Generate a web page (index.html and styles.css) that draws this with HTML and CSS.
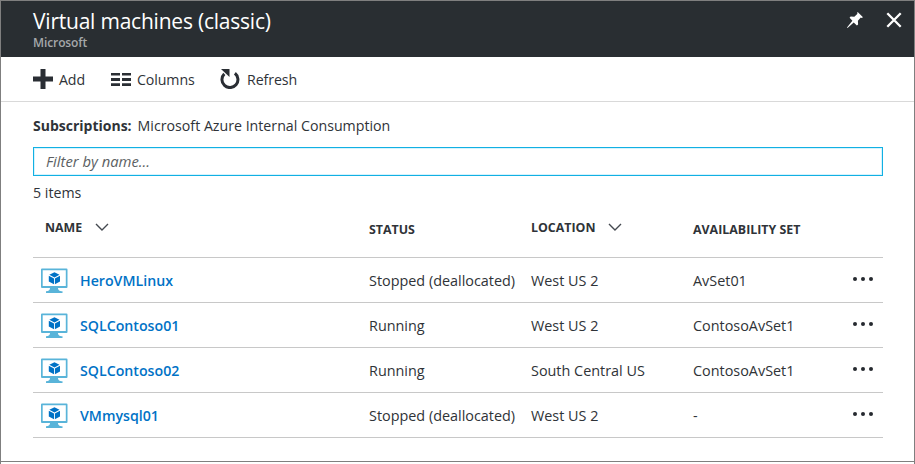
FILE: index.html
```html
<!DOCTYPE html>
<html lang="en">
<head>
<meta charset="utf-8">
<title>Virtual machines (classic)</title>
<link rel="stylesheet" href="styles.css">
</head>
<body>
<svg width="0" height="0" class="defs" aria-hidden="true">
  <symbol id="vm" viewBox="0 0 28 26">
    <path fill="#59b4d9" fill-rule="evenodd" d="M2 .5h24.500a1 1 0 0 1 1 1v17.500a1 1 0 0 1-1 1H18c0 2 1 3 4.500 3.300V25H6v-1.700c3-.3 4-1.300 4-3.300H2a1 1 0 0 1-1-1V1.500a1 1 0 0 1 1-1zm.7 1.800V18h23.100V2.300z"/>
    <path fill="#0072c6" d="M14.500 4.300 19.500 6.800 14.500 9.400 9.300 6.800zM8.800 7.700l5.200 2.700v5.800l-5.200-2.800zM20 7.700l-5.100 2.700v5.800l5.100-2.800z"/>
  </symbol>
  <symbol id="chev" viewBox="0 0 14 8"><path fill="none" stroke="#444950" stroke-width="1.400" d="M1 1l6 6 6-6"/></symbol>
  <symbol id="dots" viewBox="0 0 22 6"><g fill="#25292f"><circle cx="3" cy="3" r="2"/><circle cx="11" cy="3" r="2"/><circle cx="19" cy="3" r="2"/></g></symbol>
</svg>
<div class="blade">
  <header class="head">
    <div>
      <h1>Virtual machines (classic)</h1>
      <div class="publisher">Microsoft</div>
    </div>
    <div class="actions">
      <svg width="18" height="18" viewBox="0 0 18 18"><path fill="#fff" d="M11.700 1l5.300 5.300-1.500.6-.7-.3-2.900 3.200.2 3.600-1.200 1-3.200-3L1.500 17l-.5-.6 5.400-6.700L3.600 6.700l1-1.200 3.700.3 3.200-3-.4-.7z"/></svg>
      <svg width="16" height="16" viewBox="0 0 16 16"><path fill="none" stroke="#fff" stroke-width="2.300" d="M1.300 1.300l13.400 13.400M14.700 1.300L1.300 14.700"/></svg>
    </div>
  </header>
  <nav class="tools">
    <span class="tool add"><svg width="20" height="20" viewBox="0 0 20 20"><path fill="#2a2e34" d="M7.500 0h5v7.500H20v5h-7.500V20h-5v-7.500H0v-5h7.500z"/></svg><span>Add</span></span>
    <span class="tool columns"><svg width="20" height="13" viewBox="0 0 20 13"><path fill="#2a2e34" d="M0 0h9v2.500H0zM11 0h9v2.500h-9zM0 5h9v3H0zM11 5h9v3h-9zM0 10.200h9V13H0zM11 10.200h9V13h-9z"/></svg><span>Columns</span></span>
    <span class="tool refresh"><svg width="20" height="20" viewBox="0 0 20 20"><path fill="none" stroke="#2a2e34" stroke-width="3" d="M4.300 4.900a8 8 0 1 0 10.600-.6"/><path fill="#2a2e34" d="M1 0h8.500v8z"/></svg><span>Refresh</span></span>
  </nav>
  <main class="body">
    <div class="subs"><b>Subscriptions:</b><span>Microsoft Azure Internal Consumption</span></div>
    <input class="filter" type="text" placeholder="Filter by name...">
    <div class="count">5 items</div>
    <div class="grid">
      <div class="row header">
        <div class="name up"><span>NAME</span><svg width="14" height="8"><use href="#chev"/></svg></div>
        <div>STATUS</div>
        <div class="up"><span>LOCATION</span><svg width="14" height="8"><use href="#chev"/></svg></div>
        <div>AVAILABILITY SET</div>
      </div>
      <div class="row"><a class="name"><svg width="28" height="26"><use href="#vm"/></svg><span>HeroVMLinux</span></a><div>Stopped (deallocated)</div><div>West US 2</div><div>AvSet01</div><svg class="more" width="22" height="6"><use href="#dots"/></svg></div>
      <div class="row"><a class="name"><svg width="28" height="26"><use href="#vm"/></svg><span>SQLContoso01</span></a><div>Running</div><div>West US 2</div><div>ContosoAvSet1</div><svg class="more" width="22" height="6"><use href="#dots"/></svg></div>
      <div class="row"><a class="name"><svg width="28" height="26"><use href="#vm"/></svg><span>SQLContoso02</span></a><div>Running</div><div>South Central US</div><div>ContosoAvSet1</div><svg class="more" width="22" height="6"><use href="#dots"/></svg></div>
      <div class="row"><a class="name"><svg width="28" height="26"><use href="#vm"/></svg><span>VMmysql01</span></a><div>Stopped (deallocated)</div><div>West US 2</div><div>-</div><svg class="more" width="22" height="6"><use href="#dots"/></svg></div>
    </div>
  </main>
</div>
</body>
</html>
```
FILE: styles.css
```css
* { box-sizing: border-box; }
body {
  margin: 0;
  height: 464px;
  overflow: hidden;
  background: #fff;
  border: solid #7f7f7f;
  border-width: 0 1px;
  color: #2f3338;
  font: 14.200px/20px "Open Sans", "Noto Sans", sans-serif;
}
.defs { position: absolute; }
.blade { height: 462px; border: solid #7f7f7f; border-width: 1px 0; }
svg { display: block; flex: none; }

.head {
  display: flex;
  justify-content: space-between;
  height: 56px;
  padding: 5px 12px 0 32px;
  background: #292e32;
  color: #fff;
}
h1 { margin: 0; font-size: 21px; line-height: 30px; font-weight: 400; letter-spacing: -0.22px; }
.publisher { font-size: 12px; line-height: 14px; font-weight: 600; color: #a5a8aa; letter-spacing: -0.1px; }
.actions { display: flex; gap: 22px; padding-top: 5px; }
.actions svg:last-child { margin-top: 1px; }

.tools {
  display: flex;
  align-items: center;
  height: 45px;
  padding-left: 32px;
  border-bottom: 1px solid #d9d9d9;
}
.tool { display: flex; align-items: center; gap: 6px; letter-spacing: -0.1px; }
.tool > span { padding-top: 1px; }
.add { width: 78px; }
.columns { width: 109px; }
.refresh { gap: 7px; }

.body { padding: 14px 31px 0 32px; }
.subs { display: flex; gap: 6px; }
.subs b { font-size: 14px; }
.filter {
  display: block;
  width: 850px;
  height: 29px;
  margin-top: 11px;
  padding: 0 12px 2px;
  border: 1px solid #12b0e3;
  box-shadow: inset 0 0 0 1px #d5f3fd;
  outline: 0;
  font: italic 14.800px "Open Sans", "Noto Sans", sans-serif;
}
.filter::placeholder { color: #5c5f63; opacity: 1; }
.count { margin-top: 7px; }
.grid { width: 850px; margin-top: 9px; }
.row {
  display: grid;
  grid-template-columns: 336px 162px 162px 159px 22px;
  align-items: center;
  height: 45px;
  padding-top: 1px;
  font-size: 14.400px;
  border-bottom: 1px solid #c8c8c8;
}
.name { display: flex; align-items: center; }
a.name { padding-left: 7px; gap: 12px; color: #0072c6; font-weight: 600; font-size: 14.200px; }
.more { margin-bottom: 4px; }
.header { height: 46px; padding-top: 0; align-items: start; font-size: 12.400px; font-weight: 700; }
.header > div { padding-top: 8px; }
.header .up { display: flex; align-items: center; gap: 12px; padding-top: 6px; }
.header .up svg { margin-top: -2px; }
.header .name { padding-left: 12px; gap: 13px; }
```
